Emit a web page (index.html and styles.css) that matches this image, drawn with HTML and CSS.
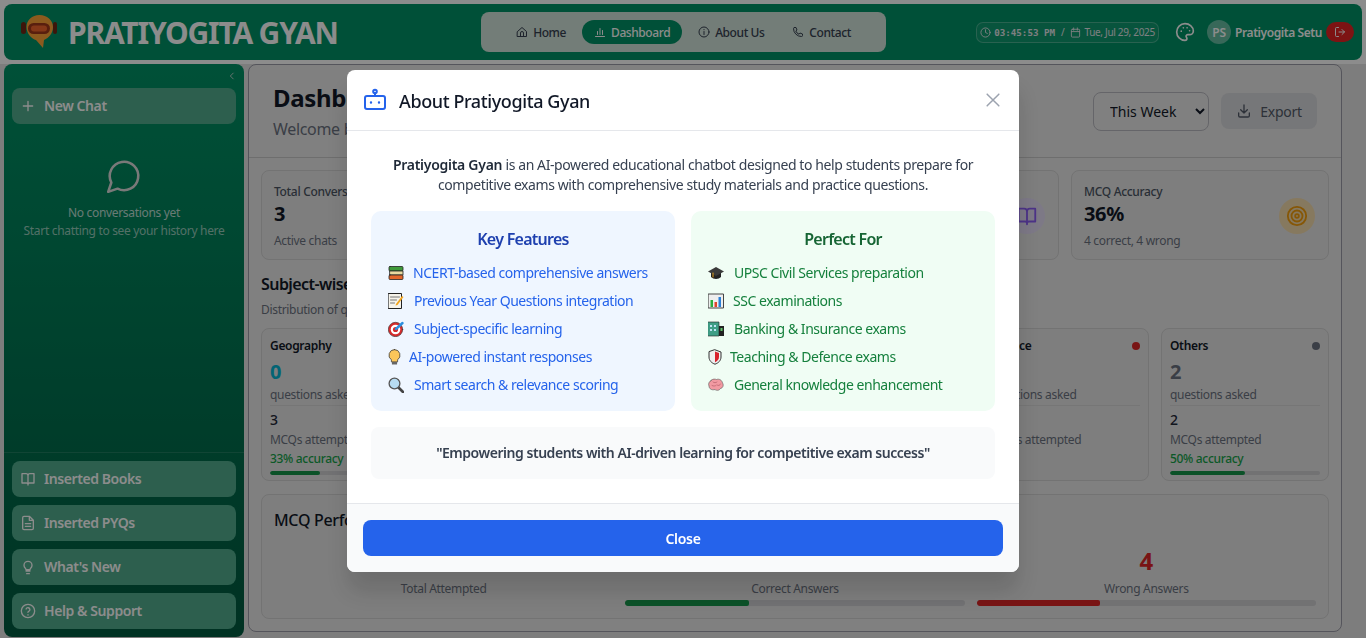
FILE: index.html
```html
<!DOCTYPE html>
<html lang="en">
<head>
<meta charset="utf-8">
<title>Pratiyogita Gyan</title>
<link rel="stylesheet" href="styles.css">
</head>
<body>
<div class="app">
  <header class="topbar">
    <div class="brand">
      <svg class="logo" viewBox="0 0 38 34" width="38" height="34"><rect x="1" y="7" width="5" height="12" rx="2.500" fill="#6e2815"/><rect x="33" y="7" width="4" height="12" rx="2" fill="#6e2815"/><path d="M19.500 0C12 0 6.500 5 6.500 12c0 7 5.500 12 9.500 13l7 8 1-8c5-2 9-7 9-13C33 5 27 0 19.500 0z" fill="#ffa537"/><rect x="8" y="8" width="22" height="11" rx="5.500" fill="#a33a1a"/><rect x="11" y="10.500" width="16" height="6" rx="3" fill="#f0642d"/></svg>
      <span class="brand-name">PRATIYOGITA GYAN</span>
    </div>
    <nav class="nav">
      <a class="nav-item"><svg class="ic12" viewBox="0 0 24 24"><path d="M3 11l9-8 9 8v10H3z"/><path d="M9 21v-7a3 3 0 0 1 6 0v7"/></svg>Home</a>
      <a class="nav-item active"><svg class="ic12" viewBox="0 0 24 24"><path d="M3 21h18M7 17v-6M12 17V5M17 17V9"/></svg>Dashboard</a>
      <a class="nav-item"><svg class="ic12" viewBox="0 0 24 24"><circle cx="12" cy="12" r="10"/><path d="M12 11v6M12 7v.5"/></svg>About Us</a>
      <a class="nav-item"><svg class="ic12" viewBox="0 0 24 24"><path d="M5 3h3l2 5-2.500 2a12 12 0 0 0 6.500 6.500L16 14l5 2v3a2 2 0 0 1-2 2A16 16 0 0 1 3 5a2 2 0 0 1 2-2z"/></svg>Contact</a>
    </nav>
    <div class="top-right">
      <div class="clock">
        <svg class="ic11" viewBox="0 0 24 24"><circle cx="12" cy="12" r="10"/><path d="M12 6v6l4 2"/></svg>
        <span class="time">03:45:53 PM</span><span class="slash">/</span>
        <svg class="ic11" viewBox="0 0 24 24"><rect x="3" y="5" width="18" height="17" rx="2"/><path d="M3 10h18M8 2v5M16 2v5"/></svg>
        <span>Tue, Jul 29, 2025</span>
      </div>
      <svg class="palette" viewBox="0 0 24 24"><path d="M12 2a10 10 0 0 0 0 20c1.500 0 2.300-1 2.300-2.200 0-1.300-1-1.700-1-2.800 0-1 .9-1.800 2-1.800h2.200A4.500 4.500 0 0 0 22 10.700C22 5.800 17.500 2 12 2z"/><circle cx="7.500" cy="11" r="1" class="dotf"/><circle cx="10" cy="7" r="1" class="dotf"/><circle cx="14.500" cy="7" r="1" class="dotf"/><circle cx="17.500" cy="10.500" r="1" class="dotf"/></svg>
      <span class="avatar">PS</span>
      <span class="username">Pratiyogita Setu</span>
      <span class="logout"><svg class="ic12" viewBox="0 0 24 24"><path d="M9 3H5a2 2 0 0 0-2 2v14a2 2 0 0 0 2 2h4M10 12h11M16 7l5 5-5 5"/></svg></span>
    </div>
  </header>

  <div class="workspace">
    <aside class="sidebar">
      <div class="collapse"><svg class="ic10" viewBox="0 0 24 24"><path d="M15 5l-7 7 7 7"/></svg></div>
      <div class="side-top">
        <button class="side-btn"><svg class="ic16" viewBox="0 0 24 24"><path d="M12 5v14M5 12h14"/></svg>New Chat</button>
      </div>
      <div class="empty">
        <svg class="empty-ic" viewBox="0 0 24 24"><path d="M7.900 20A9 9 0 1 0 4 16.100L2 22z"/></svg>
        <p class="empty-title">No conversations yet</p>
        <p class="empty-sub">Start chatting to see your history here</p>
      </div>
      <div class="side-bottom">
        <button class="side-btn"><svg class="ic16" viewBox="0 0 24 24"><path d="M12 7v14M3 4h6a3 3 0 0 1 3 3 3 3 0 0 1 3-3h6v14h-7a2 2 0 0 0-2 2 2 2 0 0 0-2-2H3z"/></svg>Inserted Books</button>
        <button class="side-btn"><svg class="ic16" viewBox="0 0 24 24"><path d="M14 2H6a2 2 0 0 0-2 2v16a2 2 0 0 0 2 2h12a2 2 0 0 0 2-2V8zM14 2v6h6M8 13h8M8 17h8"/></svg>Inserted PYQs</button>
        <button class="side-btn"><svg class="ic16" viewBox="0 0 24 24"><path d="M9 18h6M10 22h4M8 14c-1.300-1.200-2-2.700-2-4.500a6 6 0 0 1 12 0c0 1.800-.7 3.300-2 4.500-.7.700-1 1.500-1 2H9c0-.5-.3-1.300-1-2z"/></svg>What's New</button>
        <button class="side-btn"><svg class="ic16" viewBox="0 0 24 24"><circle cx="12" cy="12" r="10"/><path d="M9.100 9a3 3 0 0 1 5.800 1c0 2-3 2.500-3 4M12 17.500v.5"/></svg>Help &amp; Support</button>
      </div>
    </aside>

    <main class="main">
      <div class="main-head">
        <div class="head-text">
          <h1 class="page-title">Dashboard</h1>
          <p class="page-sub">Welcome back</p>
        </div>
        <div class="head-actions">
          <select class="range"><option>This Week</option></select>
          <button class="export"><svg class="ic16" viewBox="0 0 24 24"><path d="M12 3v12M7 10l5 5 5-5M4 15v4a2 2 0 0 0 2 2h12a2 2 0 0 0 2-2v-4"/></svg>Export</button>
        </div>
      </div>
      <div class="main-body">
        <div class="stats">
          <div class="stat"><div><p class="stat-label">Total Conversations</p><p class="stat-value">3</p><p class="stat-sub">Active chats</p></div></div>
          <div class="stat"></div>
          <div class="stat"><span></span><span class="stat-ic violet"><svg class="ic20" viewBox="0 0 24 24"><path d="M12 7v14M3 4h6a3 3 0 0 1 3 3 3 3 0 0 1 3-3h6v14h-7a2 2 0 0 0-2 2 2 2 0 0 0-2-2H3z"/></svg></span></div>
          <div class="stat"><div><p class="stat-label">MCQ Accuracy</p><p class="stat-value">36%</p><p class="stat-sub">4 correct, 4 wrong</p></div><span class="stat-ic amber"><svg class="ic20" viewBox="0 0 24 24"><circle cx="12" cy="12" r="10"/><circle cx="12" cy="12" r="6"/><circle cx="12" cy="12" r="2"/></svg></span></div>
        </div>

        <h2 class="sec-title">Subject-wise</h2>
        <p class="sec-sub">Distribution of questions</p>
        <div class="subjects">
          <div class="subject"><div class="sub-head"><span>Geography</span></div><p class="sub-num teal">0</p><p class="sub-label">questions asked</p><p class="sub-mcq">3</p><p class="sub-label">MCQs attempted</p><p class="sub-acc">33% accuracy</p><div class="track"><div class="fill green" style="width:33%"></div></div></div>
          <div class="subject"></div>
          <div class="subject"></div>
          <div class="subject"></div>
          <div class="subject"><div class="sub-head"><span>Science</span><i class="dot red"></i></div><p class="sub-num">&nbsp;</p><p class="sub-label">questions asked</p><p class="sub-mcq">&nbsp;</p><p class="sub-label">MCQs attempted</p></div>
          <div class="subject"><div class="sub-head"><span>Others</span><i class="dot slate"></i></div><p class="sub-num">2</p><p class="sub-label">questions asked</p><p class="sub-mcq">2</p><p class="sub-label">MCQs attempted</p><p class="sub-acc">50% accuracy</p><div class="track"><div class="fill green" style="width:50%"></div></div></div>
        </div>

        <section class="perf">
          <h2 class="perf-title">MCQ Performance</h2>
          <div class="perf-grid">
            <div class="perf-col"><p class="perf-num">&nbsp;</p><p class="perf-label">Total Attempted</p></div>
            <div class="perf-col"><p class="perf-num">&nbsp;</p><p class="perf-label">Correct Answers</p><div class="track big"><div class="fill green" style="width:36.400%"></div></div></div>
            <div class="perf-col"><p class="perf-num wrong">4</p><p class="perf-label">Wrong Answers</p><div class="track big"><div class="fill crimson" style="width:36.400%"></div></div></div>
          </div>
        </section>
      </div>
    </main>
  </div>
</div>

<div class="overlay">
  <div class="modal">
    <div class="modal-head">
      <svg class="robot" viewBox="0 0 24 24"><path d="M12 8V5"/><circle cx="12" cy="3.500" r="1.800"/><rect x="2" y="8" width="20" height="13" rx="2"/><path d="M8 14.500v.01M16 14.500v.01" stroke-width="2.400"/></svg>
      <h3 class="modal-title">About Pratiyogita Gyan</h3>
      <svg class="close-x" viewBox="0 0 24 24"><path d="M5 5l14 14M19 5L5 19"/></svg>
    </div>
    <div class="modal-body">
      <p class="intro"><strong>Pratiyogita Gyan</strong> is an AI-powered educational chatbot designed to help students prepare for competitive exams with comprehensive study materials and practice questions.</p>
      <div class="columns">
        <div class="panel blue">
          <h4 class="panel-title">Key Features</h4>
          <ul class="list">
            <li><span class="em w25"><svg viewBox="0 0 16 16" width="16" height="16"><rect x="1" y="1.500" width="14" height="4.500" rx="1" fill="#3f9a3a" stroke="#222" stroke-width=".8"/><rect x="2" y="6" width="13" height="4" fill="#e8d9a0" stroke="#222" stroke-width=".8"/><rect x="1" y="10" width="14" height="4.500" rx="1" fill="#e2662a" stroke="#222" stroke-width=".8"/></svg></span>NCERT-based comprehensive answers</li>
            <li><span class="em w26"><svg viewBox="0 0 16 16" width="16" height="16"><rect x=".5" y=".5" width="13" height="15" fill="#f6f3ea" stroke="#222"/><path d="M2.500 4h9M2.500 7h6M2.500 10h4" stroke="#777"/><path d="M8 11l6-8 1.500 1-6 8-2 .5z" fill="#f2a51e"/></svg></span>Previous Year Questions integration</li>
            <li><span class="em w26"><svg viewBox="0 0 16 16" width="16" height="16"><circle cx="7.500" cy="8.500" r="7.200" fill="#d62b2b" stroke="#333" stroke-width=".6"/><circle cx="7.500" cy="8.500" r="4.800" fill="#fff"/><circle cx="7.500" cy="8.500" r="2.600" fill="#d62b2b"/><path d="M8 8L14.500 2" stroke="#2b8fe0" stroke-width="2.400"/></svg></span>Subject-specific learning</li>
            <li><span class="em w21"><svg viewBox="2 0.500 12 15.500" width="13" height="16"><path d="M8 1a5.500 5.500 0 0 0-3 10v2h6v-2A5.500 5.500 0 0 0 8 1z" fill="#fbc65a" stroke="#444" stroke-width=".8"/><rect x="5.500" y="13" width="5" height="2.500" fill="#666"/></svg></span>AI-powered instant responses</li>
            <li><span class="em w26"><svg viewBox="0 0 16 16" width="16" height="16"><path d="M10 10l5 5" stroke="#444" stroke-width="2.600"/><circle cx="6.500" cy="6.500" r="5.400" fill="#b7dcf2" stroke="#555" stroke-width="1.300"/></svg></span>Smart search &amp; relevance scoring</li>
          </ul>
        </div>
        <div class="panel mint">
          <h4 class="panel-title green-t">Perfect For</h4>
          <ul class="list green-l">
            <li><span class="em w26"><svg viewBox="0 0 16 16" width="16" height="16"><path d="M3 7v5c2.500 2.500 7.500 2.500 10 0V7z" fill="#222"/><path d="M0 6.500L8 2l8 4.500L8 11z" fill="#3a3a3a"/><path d="M5 8v4" stroke="#e2a01e"/></svg></span>UPSC Civil Services preparation</li>
            <li><span class="em w25"><svg viewBox="0 0 16 16" width="16" height="16"><rect x=".5" y="1" width="15" height="14" fill="#eee" stroke="#444"/><rect x="2.500" y="7" width="2.500" height="7" fill="#27ae3c"/><rect x="6.500" y="9" width="2.500" height="5" fill="#e0452c"/><rect x="10.500" y="4" width="2.500" height="10" fill="#2a7fd6"/></svg></span>SSC examinations</li>
            <li><span class="em w26"><svg viewBox="0 0 16 16" width="16" height="16"><rect x="0" y="1" width="11" height="14" fill="#3f9e86" stroke="#222" stroke-width=".6"/><path d="M2 4h2v2H2zM6 4h2v2H6zM2 8h2v2H2zM6 8h2v2H6z" fill="#bfe4f5"/><rect x="11" y="5" width="5" height="10" fill="#222"/><rect x="12.500" y="7" width="2" height="3" fill="#5ec46a"/></svg></span>Banking &amp; Insurance exams</li>
            <li><span class="em w22"><svg viewBox="0 0 14 16" width="14" height="16"><path d="M7 .8L13 3v5c0 3.500-2.500 6-6 7.200C3.500 14 1 11.500 1 8V3z" fill="#eee" stroke="#333"/><path d="M7 2.500L11 4v4c0 2.500-1.500 4-4 5.200z" fill="#d8202c"/></svg></span>Teaching &amp; Defence exams</li>
            <li><span class="em w26"><svg viewBox="0 0 16 16" width="16" height="16"><path d="M3 3.500C5 1.500 7 2 8.500 2.500 11 1.500 14 3 14.500 6 16 8 15 11 12.500 11.500 11 14 8 13.500 7 12.500 4 13.500 1 12 1 9 0 7 1 4.500 3 3.500z" fill="#f29aa2" stroke="#555" stroke-width=".6"/><path d="M5 5c1 1 3 1 4 0M4 8.500c1.500 1 3 .5 4 0M9 8c1.500 1 3 .5 3.500-1" stroke="#b85f6a" stroke-width=".7" fill="none"/></svg></span>General knowledge enhancement</li>
          </ul>
        </div>
      </div>
      <p class="quote">"Empowering students with AI-driven learning for competitive exam success"</p>
    </div>
    <div class="modal-foot"><button class="close-btn">Close</button></div>
  </div>
</div>
</body>
</html>
```

FILE: styles.css
```css
* { box-sizing: border-box; }
html, body { margin: 0; height: 638px; overflow: hidden; }
body { font-family: "Noto Sans", "Open Sans", sans-serif; background: #fff; color: #111827; letter-spacing: -.02em; }
p, h1, h2, h3, h4, ul { margin: 0; padding: 0; }
svg { fill: none; stroke: currentColor; stroke-width: 2; stroke-linecap: round; stroke-linejoin: round; flex: none; }
.em svg, .logo { stroke: none; stroke-width: 1; }
.ic10 { width: 10px; height: 10px; }
.ic11 { width: 11px; height: 11px; }
.ic12 { width: 12px; height: 12px; }
.ic16 { width: 16px; height: 16px; }
.ic20 { width: 22px; height: 22px; }

.app { height: 638px; display: flex; flex-direction: column; padding: 4px 4px 1px; gap: 4px; }

.topbar { height: 56px; flex: none; background: #009366; border-radius: 8px; display: flex; align-items: center; padding: 0 8px 0 16px; position: relative; }
.brand { display: flex; align-items: center; gap: 10px; width: 461px; }
.logo { display: block; }
.brand-name { font-size: 30px; font-weight: 700; color: #fff; letter-spacing: -.04em; white-space: nowrap; }
.nav { width: 405px; height: 40px; background: #d1e3da; border-radius: 8px; display: flex; align-items: center; justify-content: center; gap: 4px; font-size: 12px; font-weight: 500; color: #374151; letter-spacing: -.035em; }
.nav-item { display: flex; align-items: center; gap: 5px; height: 24px; padding: 0 12px; border-radius: 12px; }
.nav-item.active { background: #009366; color: #fff; }
.top-right { margin-left: auto; display: flex; align-items: center; color: #fff; }
.clock { width: 183px; height: 21px; margin-right: 16px; border: 1px solid rgba(255,255,255,.25); border-radius: 7px; display: flex; align-items: center; justify-content: center; gap: 3px; font-size: 10px; color: #e5e7eb; white-space: nowrap; background: rgba(255,255,255,.06); }
.time { font-family: "DejaVu Sans Mono", "Liberation Mono", monospace; font-weight: 700; font-size: 9.200px; letter-spacing: 0; }
.slash { margin: 0 3px; }
.palette { width: 20px; height: 20px; margin-right: 12px; }
.dotf { fill: currentColor; stroke: none; }
.avatar { width: 24px; height: 24px; border-radius: 50%; background: rgba(255,255,255,.4); display: flex; align-items: center; justify-content: center; font-size: 12px; font-weight: 600; margin-right: 4px; }
.username { font-size: 12px; font-weight: 600; margin-right: 4px; white-space: nowrap; letter-spacing: -.035em; }
.logout { width: 28px; height: 20px; border-radius: 10px; background: #e32424; display: flex; align-items: center; justify-content: center; }

.workspace { flex: 1; min-height: 0; display: flex; gap: 4px; margin: 0 -4px -1px; padding: 0 4px 1px; background: #e3e3e3; }
.sidebar { width: 240px; flex: none; border-radius: 8px; background: linear-gradient(180deg, #009366, #005b40); display: flex; flex-direction: column; color: #fff; }
.collapse { height: 24px; display: flex; align-items: flex-start; justify-content: flex-end; padding: 7px 7px 0 0; color: #ddd; }
.side-top { padding: 0 8px; }
.side-btn { width: 100%; height: 36px; border: 0; border-radius: 8px; background: #52ad8e; color: #fff; font: inherit; font-size: 14px; font-weight: 600; letter-spacing: -.03em; display: flex; align-items: center; gap: 8px; padding: 0 8px 1px; }
.empty { flex: 1; display: flex; flex-direction: column; align-items: center; padding-top: 33px; font-size: 12px; color: rgba(255,255,255,.75); }
.empty-ic { width: 38px; height: 38px; stroke-width: 1.600; margin-bottom: 9px; color: #ddd; }
.empty-title { line-height: 18px; }
.empty-sub { line-height: 18px; color: rgba(255,255,255,.6); }
.side-bottom { border-top: 1px solid rgba(255,255,255,.12); padding: 8px; display: flex; flex-direction: column; gap: 8px; }

.main { width: 1094px; margin-bottom: 5px; border: 1px solid #9b9ba8; border-radius: 8px; background: #e9e9e9; overflow: hidden; display: flex; flex-direction: column; }
.main-head { height: 93px; flex: none; display: flex; justify-content: space-between; align-items: center; padding: 0 24px; border-bottom: 1px solid #c8c8c8; }
.head-text { margin-top: 2px; }
.page-title { font-size: 24px; font-weight: 700; line-height: 32px; }
.page-sub { font-size: 16px; line-height: 27px; margin-top: 2px; color: #6b7280; }
.head-actions { display: flex; align-items: center; gap: 12px; }
.range { width: 116px; height: 39px; border: 1px solid #b8b8bf; border-radius: 8px; background: #e9e9e9; padding: 0 12px; font: inherit; font-size: 14px; color: #111827; }
.export { width: 96px; height: 36px; border: 0; border-radius: 8px; background: #d8d9dc; color: #525a68; font: inherit; font-size: 14px; letter-spacing: -.02em; display: flex; align-items: center; justify-content: center; gap: 8px; }

.main-body { padding: 12px; }
.stats { display: grid; grid-template-columns: repeat(4, 1fr); gap: 12px; }
.stat { height: 90px; border: 1px solid #d1d1d1; border-radius: 8px; background: #e6e6e6; padding: 19px 12px 13px; display: flex; justify-content: space-between; align-items: center; }
.stat-label { font-size: 12px; line-height: 18px; font-weight: 500; color: #4b5563; }
.stat-value { font-size: 20px; line-height: 26px; font-weight: 700; }
.stat-sub { font-size: 12px; line-height: 26px; margin: 1px 0 -1px; color: #6b7280; }
.stat-ic { width: 36px; height: 36px; border-radius: 50%; display: flex; align-items: center; justify-content: center; margin: 0 1px 4px 0; }
.violet { background: #e4dcf5; color: #8b5cf6; }
.amber { background: #f5dcae; color: #f59e0b; }

.sec-title { margin-top: 13px; font-size: 16px; line-height: 22px; font-weight: 600; letter-spacing: -.035em; }
.sec-sub { margin-top: 6px; font-size: 12px; line-height: 18px; color: #6b7280; }
.subjects { margin-top: 9px; display: grid; grid-template-columns: repeat(6, 1fr); gap: 12px; }
.subject { height: 153px; border: 1px solid #d1d1d1; border-radius: 8px; background: #e6e6e6; padding: 9px 8px 8px; }
.sub-head { display: flex; justify-content: space-between; align-items: center; font-size: 12px; line-height: 16px; font-weight: 600; }
.dot { width: 8px; height: 8px; border-radius: 50%; }
.red { background: #dc2626; }
.slate { background: #6b7280; }
.sub-num { margin-top: 4px; font-size: 20px; line-height: 28px; font-weight: 700; color: #6b7280; }
.teal { color: #06b6d4; }
.sub-label { font-size: 12px; line-height: 18px; color: #6b7280; }
.sub-mcq { padding-top: 3px; border-top: 1px solid #d8d8d8; font-size: 14px; line-height: 22px; font-weight: 500; color: #1f2937; margin-top: 1px; }
.sub-acc { margin-top: 2px; font-size: 12px; line-height: 16px; font-weight: 500; color: #16a34a; }
.track { height: 4px; margin-top: 4px; border-radius: 2px; background: #cfcfd2; overflow: hidden; }
.fill { height: 100%; border-radius: 2px; }
.green { background: #15954a; }
.crimson { background: #dc2626; }

.perf { margin-top: 13px; height: 125px; border: 1px solid #d1d1d1; border-radius: 8px; background: #e6e6e6; padding: 14px 12px 12px; }
.perf-title { font-size: 16px; line-height: 22px; font-weight: 500; }
.perf-grid { display: grid; grid-template-columns: repeat(3, 1fr); gap: 12px; margin-top: 16px; }
.perf-col { text-align: center; }
.perf-num { font-size: 24px; line-height: 28px; font-weight: 700; color: #15954a; }
.perf-num.wrong { color: #dc2626; }
.perf-label { margin-top: 6px; font-size: 12px; line-height: 16px; color: #6b7280; }
.track.big { height: 6px; margin-top: 3px; border-radius: 3px; }

.overlay { position: fixed; inset: 0; background: rgba(0,0,0,.45); display: flex; align-items: flex-start; justify-content: center; padding-top: 70px; }
.modal { width: 672px; height: 502px; background: #fff; border-radius: 8px; box-shadow: 0 20px 25px rgba(0,0,0,.15); overflow: hidden; display: flex; flex-direction: column; }
.modal-head { height: 61px; flex: none; display: flex; align-items: center; gap: 12px; padding: 0 16px; border-bottom: 1px solid #e5e7eb; }
.robot { width: 24px; height: 24px; color: #2563eb; }
.modal-title { flex: 1; font-size: 18px; line-height: 26px; padding-top: 1px; font-weight: 500; color: #111827; letter-spacing: -.022em; }
.close-x { width: 20px; height: 20px; color: #9ca3af; stroke-width: 1.800; }
.modal-body { flex: 1; padding: 24px; }
.intro { text-align: center; font-size: 14px; line-height: 20px; color: #374151; padding: 0 16px; letter-spacing: -.029em; }
.intro strong { font-weight: 600; color: #1f2937; letter-spacing: -.02em; }
.columns { margin-top: 16px; display: grid; grid-template-columns: 1fr 1fr; gap: 16px; }
.panel { height: 200px; border-radius: 10px; padding: 16px 17px; }
.blue { background: #eff6ff; }
.mint { background: #f0fdf4; }
.panel-title { text-align: center; font-size: 16px; line-height: 24px; font-weight: 600; color: #1e40af; letter-spacing: -.045em; }
.green-t { color: #166534; }
.list { list-style: none; margin-top: 8px; font-size: 14px; line-height: 28px; color: #2563eb; letter-spacing: -.033em; }
.list li { display: flex; align-items: center; white-space: nowrap; }
.green-l { color: #15803d; }
.em { flex: none; display: flex; align-items: center; }
.w21 { width: 21px; }
.w22 { width: 22px; }
.w25 { width: 25px; }
.w26 { width: 26px; }
.quote { margin-top: 16px; height: 52px; padding-bottom: 1px; border-radius: 8px; background: #f9fafb; display: flex; align-items: center; justify-content: center; font-size: 14px; font-weight: 600; color: #374151; letter-spacing: -.033em; }
.modal-foot { height: 69px; flex: none; background: #f9fafb; border-top: 1px solid #e5e7eb; padding: 16px; }
.close-btn { width: 100%; height: 36px; border: 0; border-radius: 8px; background: #2563eb; color: #fff; font: inherit; font-size: 14px; font-weight: 600; letter-spacing: -.02em; }
```
